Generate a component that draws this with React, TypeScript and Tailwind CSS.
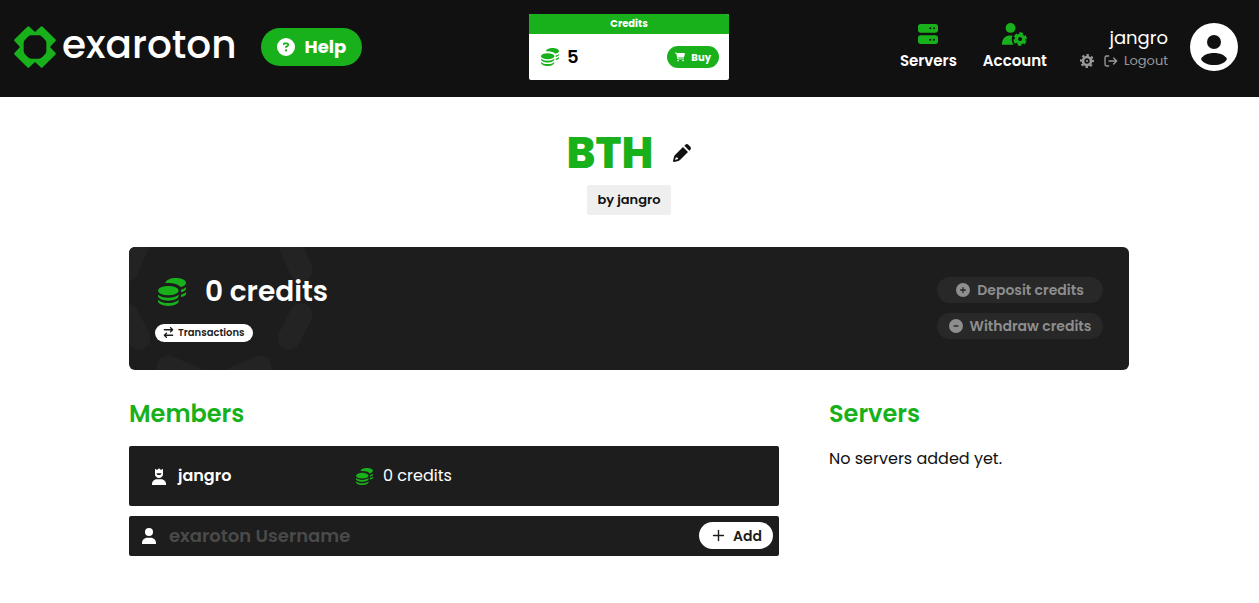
import {
  FaArrowRightArrowLeft,
  FaCartShopping,
  FaCircleMinus,
  FaCirclePlus,
  FaCircleQuestion
} from "react-icons/fa6";
import { FiPlus } from "react-icons/fi";

function Logo() {
  return (
    <svg viewBox="0 0 126 126" className="size-[42px] text-[#19b11b]" aria-hidden="true">
      <path
        fill="currentColor"
        fillRule="evenodd"
        d="M40 2q3-3 6 0l17 16L80 2q3-3 6 0l38 38q3 3 0 6l-16 17 16 17q3 3 0 6l-38 38q-3 3-6 0l-17-16-17 16q-3 3-6 0L2 86q-3-3 0-6l16-17L2 46q-3-3 0-6zM52 28q-6 0-10 4l-9 9q-4 4-4 10v24q0 6 4 10l9 9q4 4 10 4h22q6 0 10-4l9-9q4-4 4-10V51q0-6-4-10l-9-9q-4-4-10-4z"
      />
    </svg>
  );
}

function Coins({ className }: { className: string }) {
  return (
    <svg viewBox="0 0 84 84" fill="currentColor" className={className} aria-hidden="true">
      <path d="M22 15C24 6 37 0 53 0s31 6 31 14c0 6-7 11-17 13-6-8-20-12-36-12z" />
      <path d="M69 35c6-1 11-4 15-7v4c0 5-6 8-15 11zM69 50c6-2 11-4 15-8v5c0 5-6 8-15 10z" />
      <ellipse cx="31" cy="38" rx="31" ry="14" />
      <path d="M0 50c7 6 18 9 31 9s24-3 31-9v4c0 7-14 14-31 14S0 61 0 54z" />
      <path d="M0 65c7 7 18 10 31 10s24-3 31-10v5c0 7-14 14-31 14S0 77 0 70z" />
    </svg>
  );
}

function ServerIcon() {
  return (
    <svg viewBox="0 0 60 60" fill="currentColor" className="size-5" aria-hidden="true">
      <path
        fillRule="evenodd"
        d="M8 0h44q8 0 8 8v10q0 8-8 8H8q-8 0-8-8V8q0-8 8-8zm29 10a3 3 0 100 6 3 3 0 000-6zm11 0a3 3 0 100 6 3 3 0 000-6zM8 34h44q8 0 8 8v10q0 8-8 8H8q-8 0-8-8V42q0-8 8-8zm29 10a3 3 0 100 6 3 3 0 000-6zm11 0a3 3 0 100 6 3 3 0 000-6z"
      />
    </svg>
  );
}

function AccountIcon() {
  return (
    <svg viewBox="0 0 76 70" fill="currentColor" className="h-[23px] w-[25px]" aria-hidden="true">
      <circle cx="26" cy="15" r="15" />
      <path d="M0 66v-2c0-15 9-25 23-26h9c-4 9-3 20 3 28z" />
      <g fill="none" stroke="currentColor" transform="rotate(15 55 49)">
        <circle cx="55" cy="49" r="11" strokeWidth="10" />
        <circle cx="55" cy="49" r="17" strokeWidth="7" strokeDasharray="11 6.8" />
      </g>
    </svg>
  );
}

function GearIcon() {
  return (
    <svg viewBox="0 0 42 42" className="size-[14px]" aria-hidden="true" fill="none" stroke="currentColor">
      <circle cx="21" cy="21" r="18" strokeWidth="6" strokeDasharray="7 7.14" transform="rotate(-11 21 21)" />
      <circle cx="21" cy="21" r="12" strokeWidth="8" />
      <circle cx="21" cy="21" r="3" fill="currentColor" stroke="none" />
    </svg>
  );
}

function LogoutIcon() {
  return (
    <svg
      viewBox="0 0 42 36"
      className="h-3 w-[14px]"
      aria-hidden="true"
      fill="none"
      stroke="currentColor"
      strokeWidth="4"
      strokeLinecap="round"
      strokeLinejoin="round"
    >
      <path d="M14 3H8q-5 0-5 5v20q0 5 5 5h6M15 18h23M29 9l9 9-9 9" />
    </svg>
  );
}

function PencilIcon() {
  return (
    <svg viewBox="0 0 54 54" fill="currentColor" className="size-[18px]" aria-hidden="true">
      <path d="M34 5l3-3q5-4 9 0l6 6q4 4 0 9l-3 3z" />
      <path
        fillRule="evenodd"
        d="M30 9l15 15-24 24q-2 2-5 3L3 54q-3 0-3-3l3-13q1-3 3-5zM9 39l-3 9 9-3v-4h-4z"
      />
    </svg>
  );
}

function Avatar() {
  return (
    <svg viewBox="0 0 48 48" className="size-12" aria-hidden="true">
      <circle cx="24" cy="24" r="24" fill="white" />
      <circle cx="24" cy="19" r="7" fill="#111111" />
      <path d="M11 36c2-4 7-6 13-6s11 2 13 6c-2 4-7 6-13 6s-11-2-13-6z" fill="#111111" />
    </svg>
  );
}

function OwnerIcon() {
  return (
    <svg viewBox="0 0 42 51" fill="currentColor" className="h-[17px] w-[14px]" aria-hidden="true">
      <path d="M9 2l6 4 6-5 6 5 6-4v17c0 6-5 11-12 11S9 25 9 19zm5 14v3c2 3 12 3 14 0v-3z" fillRule="evenodd" />
      <path d="M0 51v-3c0-8 8-14 15-14h12c7 0 15 6 15 14v3z" />
    </svg>
  );
}

function UserIcon() {
  return (
    <svg viewBox="0 0 42 48" fill="currentColor" className="h-4 w-[14px]" aria-hidden="true">
      <circle cx="21" cy="12" r="12" />
      <path d="M0 48v-3c0-9 7-16 16-16h10c9 0 16 7 16 16v3z" />
    </svg>
  );
}

function Header() {
  return (
    <header className="grid h-[97px] grid-cols-[1fr_200px_1fr] bg-[#111111] pr-px text-white">
      <div className="flex items-center gap-6 pb-[3px] pl-3.5">
        <a href="#" className="flex items-center gap-1.5">
          <Logo />
          <span className="pb-1 text-[39px] leading-[48px] font-medium">exaroton</span>
        </a>
        <a href="#" className="flex h-[38px] items-center gap-2.5 rounded-full bg-[#19b11b] px-4 text-lg font-bold">
          <FaCircleQuestion />
          Help
        </a>
      </div>

      <div className="mt-3.5 h-[66px] overflow-hidden rounded-xs bg-white">
        <div className="h-5 bg-[#19b11b] text-center text-[10px] leading-5 font-bold">Credits</div>
        <div className="flex h-[46px] items-center pr-2.5 pl-3">
          <Coins className="size-[18px] text-[#19b11b]" />
          <span className="ml-2 text-lg font-semibold text-black">5</span>
          <button className="ml-auto flex h-[22px] items-center gap-1.5 rounded-full bg-[#19b11b] px-2 text-[10px] font-bold">
            <FaCartShopping />
            Buy
          </button>
        </div>
      </div>

      <div className="flex items-center justify-end pr-5 pb-[3px]">
        <nav className="flex gap-[26px] font-semibold">
          <a href="#" className="flex flex-col items-center gap-1.5">
            <span className="flex h-[22px] items-center text-[#19b11b]">
              <ServerIcon />
            </span>
            <span className="text-[15px] leading-5">Servers</span>
          </a>
          <a href="#" className="flex flex-col items-center gap-1.5">
            <span className="flex h-[22px] items-center text-[#19b11b]">
              <AccountIcon />
            </span>
            <span className="text-[15px] leading-5">Account</span>
          </a>
        </nav>
        <div className="ml-[33px] flex flex-col items-end pt-0.5">
          <span className="text-lg leading-[26px]">jangro</span>
          <div className="flex items-center gap-2.5 text-[#999999]">
            <button aria-label="Settings">
              <GearIcon />
            </button>
            <a href="#" className="flex items-center gap-1.5 text-[13px] leading-5">
              <LogoutIcon />
              Logout
            </a>
          </div>
        </div>
        <a href="#" className="ml-[22px]" aria-label="Profile">
          <Avatar />
        </a>
      </div>
    </header>
  );
}

function CreditPanel() {
  return (
    <section className="relative mt-8 flex h-[123px] items-center justify-between overflow-hidden rounded-md bg-[#1d1d1d] px-[26px]">
      <svg
        viewBox="0 0 200 123"
        className="absolute top-0 left-0 h-[123px] w-[200px]"
        fill="none"
        stroke="#232323"
        strokeWidth="23"
        strokeLinecap="round"
        aria-hidden="true"
      >
        <path d="M157-12L172 23M172 68L160 91M13-12L-2 23M-2 68L10 91M39 120L65 131M131 120L105 131" />
      </svg>
      <div className="relative flex flex-col items-start gap-3 pb-1">
        <div className="flex items-center gap-[19px] pl-[3px] text-white">
          <Coins className="size-7 text-[#19b11b]" />
          <h2 className="text-[28px] leading-10 font-semibold">0 credits</h2>
        </div>
        <button className="flex h-[18px] items-center gap-1 rounded-full bg-white px-2 text-[10px] font-semibold text-[#1d1d1d]">
          <FaArrowRightArrowLeft className="size-[11px]" />
          Transactions
        </button>
      </div>
      <div className="relative flex flex-col gap-2.5 pb-0.5 text-sm font-semibold text-[#8e8e8e]">
        <button className="flex h-[26px] w-[166px] items-center justify-center gap-[7px] rounded-full bg-[#282828]">
          <FaCirclePlus />
          Deposit credits
        </button>
        <button className="flex h-[26px] w-[166px] items-center justify-center gap-[7px] rounded-full bg-[#282828]">
          <FaCircleMinus />
          Withdraw credits
        </button>
      </div>
    </section>
  );
}

export default function App() {
  return (
    <div className="bg-white font-['Poppins','Inter',sans-serif] text-[#111111]">
      <Header />
      <div className="pr-px">
        <main className="mx-auto max-w-[1000px] pb-10">
          <div className="flex flex-col items-center">
            <div className="mt-8 flex items-center gap-5">
              <h1 className="text-[43px] leading-12 font-extrabold text-[#19b11b]">BTH</h1>
              <button aria-label="Rename">
                <PencilIcon />
              </button>
            </div>
            <div className="mt-2 rounded-xs bg-[#efefef] px-2.5 py-[5px] text-[13px] leading-5 font-semibold">
              by jangro
            </div>
          </div>

          <CreditPanel />

          <div className="mt-6 flex gap-[50px]">
            <section className="flex-1">
              <h2 className="text-2xl leading-10 font-semibold text-[#19b11b]">Members</h2>
              <div className="mt-3 flex h-[60px] items-center rounded-xs bg-[#1d1d1d] px-[23px] text-white">
                <div className="flex w-[204px] items-center gap-3 font-semibold">
                  <OwnerIcon />
                  jangro
                </div>
                <div className="flex items-center gap-2.5">
                  <Coins className="size-[17px] text-[#19b11b]" />
                  0 credits
                </div>
              </div>
              <form className="mt-2.5 flex h-10 items-center rounded-xs bg-[#1d1d1d] pr-1.5 pb-px pl-[13px] text-white">
                <label htmlFor="username" aria-label="Username">
                  <UserIcon />
                </label>
                <input
                  id="username"
                  type="text"
                  placeholder="exaroton Username"
                  className="ml-[13px] h-full min-w-0 flex-1 bg-transparent text-lg font-semibold outline-none placeholder:text-[#4a4a4a]"
                />
                <button
                  type="button"
                  className="flex h-[27px] items-center gap-1.5 rounded-full bg-white px-[11px] text-sm font-semibold text-[#1d1d1d]"
                >
                  <FiPlus className="size-[17px]" />
                  Add
                </button>
              </form>
            </section>
            <section className="w-[300px]">
              <h2 className="text-2xl leading-10 font-semibold text-[#19b11b]">Servers</h2>
              <p className="mt-[13px]">No servers added yet.</p>
            </section>
          </div>
        </main>
      </div>
    </div>
  );
}
